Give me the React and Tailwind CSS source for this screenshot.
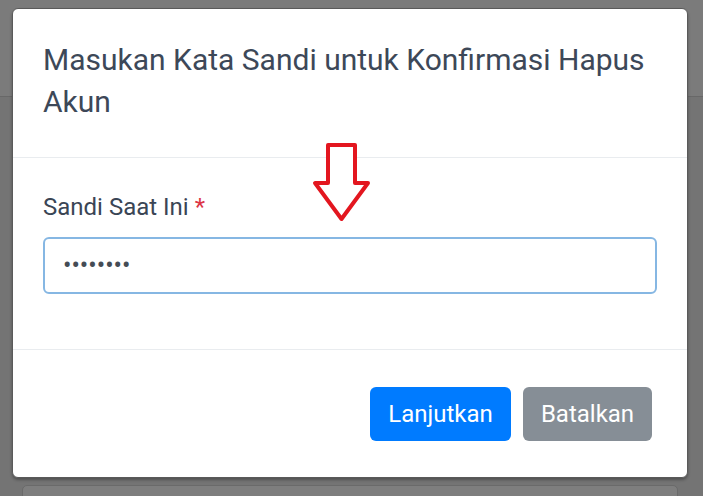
import React from "react";

export default function App() {
  return (
    <div className="relative w-[703px] h-[496px] overflow-hidden bg-[#767676] font-['Roboto',sans-serif]">
      {/* dimmed page behind the modal */}
      <div className="flex flex-col h-full">
        <div className="h-[97px] shrink-0 bg-[#7b7b7b] border-b border-[#686868]" />
        <div className="flex-1 bg-[#747474] px-[22px] pt-[388px]">
          <div className="w-[656px] h-[40px] rounded-[5px] bg-[#7e7e7e] border border-[#6a6a6a]" />
        </div>
      </div>

      {/* modal */}
      <div className="absolute left-[12px] top-[8px] w-[676px] rounded-[6px] bg-white border border-[#5a5a5a] shadow-[0_2px_3px_rgba(0,0,0,0.3)] flex flex-col">
        <div className="pl-[30px] pr-[20px] pt-[30px] pb-[34px] border-b border-[#e9ecef]">
          <h5 className="text-[30px] leading-[42px] text-[#3d4858] font-normal">
            Masukan Kata Sandi untuk Konfirmasi Hapus Akun
          </h5>
        </div>
        <div className="px-[30px] pt-[31px] pb-[55px] border-b border-[#e9ecef]">
          <label className="block text-[24px] leading-[36px] text-[#3a4555]">
            Sandi Saat Ini <span className="text-[#dc3545]">*</span>
          </label>
          <input
            type="password"
            readOnly
            value="12345678"
            className="mt-[12px] block w-full h-[57px] rounded-[6px] border-2 border-[#86b7e3] bg-white px-[18px] text-[25px] text-[#454c55] outline-none font-['Roboto',sans-serif]"
          />
        </div>
        <div className="flex justify-end gap-[12px] pt-[37px] pb-[36px] pr-[35px]">
          <button className="w-[141px] h-[54px] rounded-[6px] bg-[#007bff] text-[24px] text-white flex items-center justify-center">
            Lanjutkan
          </button>
          <button className="w-[129px] h-[54px] rounded-[6px] bg-[#868e96] text-[24px] text-white flex items-center justify-center">
            Batalkan
          </button>
        </div>
      </div>

      {/* red annotation arrow */}
      <svg
        className="absolute left-[305px] top-[135px]"
        width="75"
        height="95"
        viewBox="0 0 75 95"
      >
        <polygon
          points="23,10 50,10 50,48 63,48 36.5,84 10,48 23,48"
          fill="white"
          stroke="#e3161f"
          strokeWidth="4"
          strokeLinejoin="round"
        />
      </svg>
    </div>
  );
}
